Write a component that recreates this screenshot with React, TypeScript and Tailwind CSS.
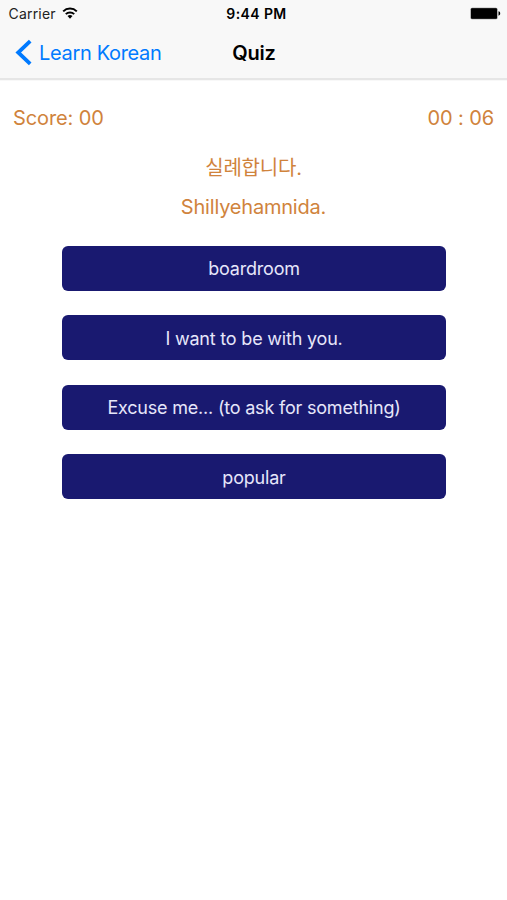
import React, { useState } from 'react';

const ANSWERS = ['boardroom', 'I want to be with you.', 'Excuse me... (to ask for something)', 'popular'];

const StatusBar: React.FC = () => (
  <div className="grid h-[25px] grid-cols-3 items-center pt-[3px] text-black">
    <div className="flex items-center pl-[8.5px]">
      <span className="text-[14px] leading-5 tracking-[0.2px] text-[#222]">Carrier</span>
      <svg className="ml-[6px] -mt-[2px] h-[12px] w-[16px]" viewBox="0 0 16 12" fill="none" stroke="currentColor" strokeWidth="2">
        <path d="M1.2 4.4a9.7 9.7 0 0 1 13.6 0" />
        <path d="M3.8 7.1a6 6 0 0 1 8.4 0" />
        <path d="M8 11.7 5.5 9.1a3.6 3.6 0 0 1 5 0Z" fill="currentColor" stroke="none" />
      </svg>
    </div>
    <span className="pl-[6px] text-center text-[14px] font-semibold leading-5 tracking-[0.4px]">9:44 PM</span>
    <div className="flex justify-end pr-[6px]">
      <svg className="-mt-px h-[13px] w-[31px]" viewBox="0 0 31 13">
        <rect x="0.5" y="0.7" width="27" height="11.6" rx="1.6" fill="#777" />
        <rect x="1" y="1.2" width="26" height="10.6" rx="1.2" fill="#000" />
        <path d="M28.5 4.3c2.3.6 2.3 3.8 0 4.4Z" fill="#000" />
      </svg>
    </div>
  </div>
);

const NavBar: React.FC = () => (
  <div className="grid h-[54px] grid-cols-[1fr_auto_1fr] items-center pt-px">
    <button className="flex items-center pl-[15px] text-[#007aff]">
      <svg className="h-[27px] w-[17px]" viewBox="0 0 17 27" fill="none" stroke="currentColor" strokeWidth="3.8">
        <path d="M15.2 2.2 3.2 13.5l12 11.3" />
      </svg>
      <span className="ml-[7px] whitespace-nowrap text-[20px] leading-7 tracking-[-0.33px]">Learn Korean</span>
    </button>
    <h1 className="pl-px text-[20px] font-semibold leading-7 tracking-[-0.2px] text-black">Quiz</h1>
  </div>
);

export default function App() {
  const [selected, setSelected] = useState<string>('');

  return (
    <div className="h-[900px] w-full bg-white font-['Inter','Noto_Sans_CJK_KR',sans-serif]">
      <header className="h-[80px] border-b-2 border-[#e6e6e6] bg-[#f8f8f8] shadow-[0_1px_0_#f8f8f8]">
        <StatusBar />
        <NavBar />
      </header>

      <main className="text-[#d0833c]">
        <div className="flex justify-between px-[13px] pt-[24px] text-[20px] leading-7 tracking-[-0.1px]">
          <span>Score: 00</span>
          <span>00 : 06</span>
        </div>

        <div className="mt-[22px] text-center text-[20px] leading-7 tracking-[-0.2px]">
          <p>실례합니다.</p>
          <p className="mt-[11px]">Shillyehamnida.</p>
        </div>

        <div className="ml-[62px] mr-[61px] mt-[24.5px] flex flex-col gap-[24.65px]">
          {ANSWERS.map((answer) => (
            <button
              key={answer}
              onClick={() => setSelected(answer)}
              aria-pressed={selected === answer}
              className="h-[45px] rounded-[6px] bg-[#191970] pt-[2px] text-[18px] leading-6 tracking-[-0.2px] text-[#e6e6fa]"
            >
              {answer}
            </button>
          ))}
        </div>
      </main>
    </div>
  );
}
